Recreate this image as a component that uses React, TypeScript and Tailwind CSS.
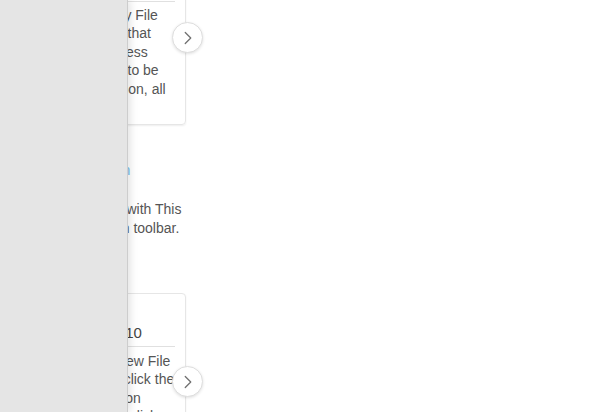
import { ChevronRight } from 'lucide-react'

const NextButton = ({ top }: { top: string }) => (
  <button
    className={`absolute right-[-18px] flex h-[31px] w-[31px] items-center justify-center rounded-full border border-[#dedede] bg-white shadow-[0_1px_3px_rgba(0,0,0,0.12)] ${top}`}
  >
    <ChevronRight className="ml-[1px] h-[22px] w-[22px] text-[#707070]" strokeWidth={1.4} />
  </button>
)

export default function App() {
  return (
    <div
      className="relative h-[412px] w-[616px] overflow-hidden bg-white text-[#555]"
      style={{ fontFamily: '"Liberation Sans", Arial, sans-serif' }}
    >
      <div className="flex w-[186px] flex-col pl-[10px]">
        {/* step card, scrolled half out of view */}
        <div className="relative mt-[-40px] rounded-[4px] border border-[#e6e6e6] pl-[13px] pr-[10px] pb-[26px] shadow-[0_1px_2px_rgba(0,0,0,0.07)]">
          <div className="flex h-[41px] items-end border-b border-[#e0e0e0] pb-[8px] text-[16px] text-[#444]">
            Step 1
          </div>
          <div className="whitespace-nowrap pt-[4px] text-[14px] leading-[18.4px]">
            <div>Select the Modify File</div>
            <div>to open a dialog that</div>
            <div>and you can access</div>
            <div>the file you wish to be</div>
            <div>opened. Click upon, all</div>
          </div>
          <NextButton top="top-[61px]" />
        </div>

        <div className="whitespace-nowrap pl-[2px] pt-[36px] text-[14px] leading-[19px]">
          <div>
            <a className="text-[#74bbea]">Modify File Section</a>
          </div>
          <div className="pt-[20px]">
            Tap <a className="text-[#3a8fd0]">Modify button</a> with This
          </div>
          <div>an icon in the main toolbar.</div>
        </div>

        <div className="relative mt-[55px] rounded-[4px] border border-[#e6e6e6] pl-[13px] pr-[10px] pb-[26px] shadow-[0_1px_2px_rgba(0,0,0,0.07)]">
          <div className="flex h-[53px] items-end whitespace-nowrap border-b border-[#e0e0e0] pb-[3px] text-[15px] leading-[20px] text-[#444]">
            Tips: Windows 10
          </div>
          <div className="whitespace-nowrap pt-[5px] text-[14px] leading-[18.4px]">
            <div>Then, create a new File</div>
            <div>Open it up then click the</div>
            <div>the Add File button</div>
            <div>in the dialog box click</div>
          </div>
          <NextButton top="top-[72px]" />
        </div>
      </div>

      {/* side drawer over the page */}
      <div className="absolute inset-y-0 left-0 w-[128px] border-r border-[#cdcdcd] bg-[#e5e5e5] shadow-[2px_0_8px_rgba(0,0,0,0.12)]" />
    </div>
  )
}
